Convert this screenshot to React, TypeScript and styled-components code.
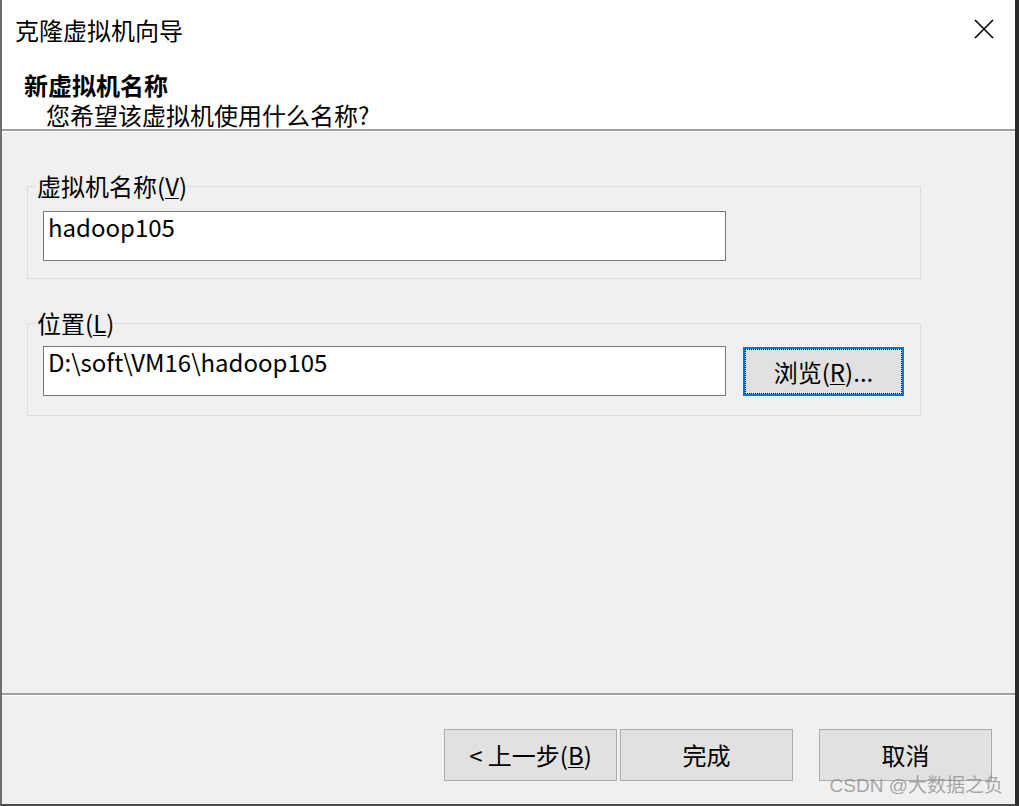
import React from "react";
import styled, { createGlobalStyle } from "styled-components";

const GlobalStyle = createGlobalStyle`
  html, body {
    margin: 0;
    padding: 0;
    background: #ffffff;
  }
  body {
    font-family: "Noto Sans CJK SC", "Noto Sans", sans-serif;
    color: #000;
  }
  * { box-sizing: border-box; }
`;

const Window = styled.div`
  position: relative;
  width: 1019px;
  height: 806px;
  display: flex;
  flex-direction: column;
  background: #f0f0f0;
  border-left: 2px solid #6d6d6d;
  border-right: 4px solid #2b2b2b;
  border-bottom: 2px solid #4a4a4a;
  overflow: hidden;
`;

const Header = styled.header`
  height: 129px;
  background: #ffffff;
  display: flex;
  flex-direction: column;
`;

const TitleBar = styled.div`
  height: 60px;
  display: flex;
  align-items: center;
  justify-content: space-between;
  padding-left: 13px;
  padding-right: 21px;
`;

const Title = styled.div`
  font-size: 24px;
  line-height: 30px;
`;

const CloseButton = styled.div`
  width: 20px;
  height: 20px;
  display: flex;
  margin-top: -2px;
`;

const Heading = styled.div`
  margin-top: 12px;
  padding-left: 22px;
  font-size: 24px;
  font-weight: 700;
  line-height: 26px;
`;

const SubHeading = styled.div`
  margin-top: 4px;
  padding-left: 44px;
  font-size: 24px;
  line-height: 26px;
`;

const Separator = styled.div`
  height: 3px;
  border-top: 2px solid #a0a0a0;
  border-bottom: 1px solid #ffffff;
`;

const Body = styled.main`
  flex: 1;
  display: flex;
  flex-direction: column;
  padding-top: 41px;
  padding-left: 25px;
  gap: 31px;
`;

const GroupBox = styled.fieldset<{ $padTop: number; $padBottom: number }>`
  width: 894px;
  margin: 0;
  border: 1px solid #dcdcdc;
  padding: ${(p) => p.$padTop}px 15px ${(p) => p.$padBottom}px 15px;
  min-inline-size: 0;
`;

const Legend = styled.legend`
  margin-left: -7px;
  padding: 0 1px;
  font-size: 24px;
  line-height: 26px;
`;

const Row = styled.div`
  display: flex;
  align-items: center;
  gap: 17px;
`;

const TextField = styled.div`
  width: 683px;
  height: 50px;
  background: #ffffff;
  border: 1px solid #7a7a7a;
  padding: 0 4px;
  font-size: 24px;
  line-height: 30px;
  white-space: nowrap;
`;

const BrowseButton = styled.button`
  width: 161px;
  height: 49px;
  margin-top: 1px;
  background: #e1e1e1;
  border: 2px solid #0078d7;
  outline: 1px dotted #000;
  outline-offset: -3px;
  font-family: inherit;
  font-size: 24px;
  line-height: 30px;
  color: #000;
  padding: 0;
`;

const Footer = styled.footer`
  height: 108px;
  display: flex;
  justify-content: flex-end;
  align-items: flex-start;
  padding-top: 33px;
  padding-right: 23px;
`;

const NavButton = styled.button<{ $gapLeft?: number }>`
  width: 173px;
  height: 52px;
  margin-left: ${(p) => p.$gapLeft ?? 0}px;
  background: #e1e1e1;
  border: 1px solid #adadad;
  font-family: inherit;
  font-size: 24px;
  line-height: 30px;
  color: #000;
  padding: 0;
`;

const Watermark = styled.div`
  position: absolute;
  right: 12px;
  bottom: 6px;
  font-family: "Liberation Sans", "Noto Sans CJK SC", sans-serif;
  font-size: 19px;
  line-height: 24px;
  color: rgba(140, 140, 140, 0.75);
  pointer-events: none;
`;

const Key = styled.span`
  text-decoration: underline;
  text-underline-offset: 2px;
  text-decoration-thickness: 1px;
`;

export default function App() {
  return (
    <>
      <GlobalStyle />
      <Window>
        <Header>
          <TitleBar>
            <Title>克隆虚拟机向导</Title>
            <CloseButton>
              <svg width="20" height="20" viewBox="0 0 20 20">
                <path d="M1 1 L19 19 M19 1 L1 19" stroke="#000" strokeWidth="1.6" fill="none" />
              </svg>
            </CloseButton>
          </TitleBar>
          <Heading>新虚拟机名称</Heading>
          <SubHeading>您希望该虚拟机使用什么名称?</SubHeading>
        </Header>
        <Separator />
        <Body>
          <GroupBox $padTop={12} $padBottom={17}>
            <Legend>
              虚拟机名称(<Key>V</Key>)
            </Legend>
            <Row>
              <TextField>hadoop105</TextField>
            </Row>
          </GroupBox>
          <GroupBox $padTop={10} $padBottom={19}>
            <Legend>
              位置(<Key>L</Key>)
            </Legend>
            <Row>
              <TextField>D:\soft\VM16\hadoop105</TextField>
              <BrowseButton>
                浏览(<Key>R</Key>)...
              </BrowseButton>
            </Row>
          </GroupBox>
        </Body>
        <Separator />
        <Footer>
          <NavButton>
            &lt; 上一步(<Key>B</Key>)
          </NavButton>
          <NavButton $gapLeft={3}>完成</NavButton>
          <NavButton $gapLeft={26}>取消</NavButton>
        </Footer>
        <Watermark>CSDN @大数据之负</Watermark>
      </Window>
    </>
  );
}
